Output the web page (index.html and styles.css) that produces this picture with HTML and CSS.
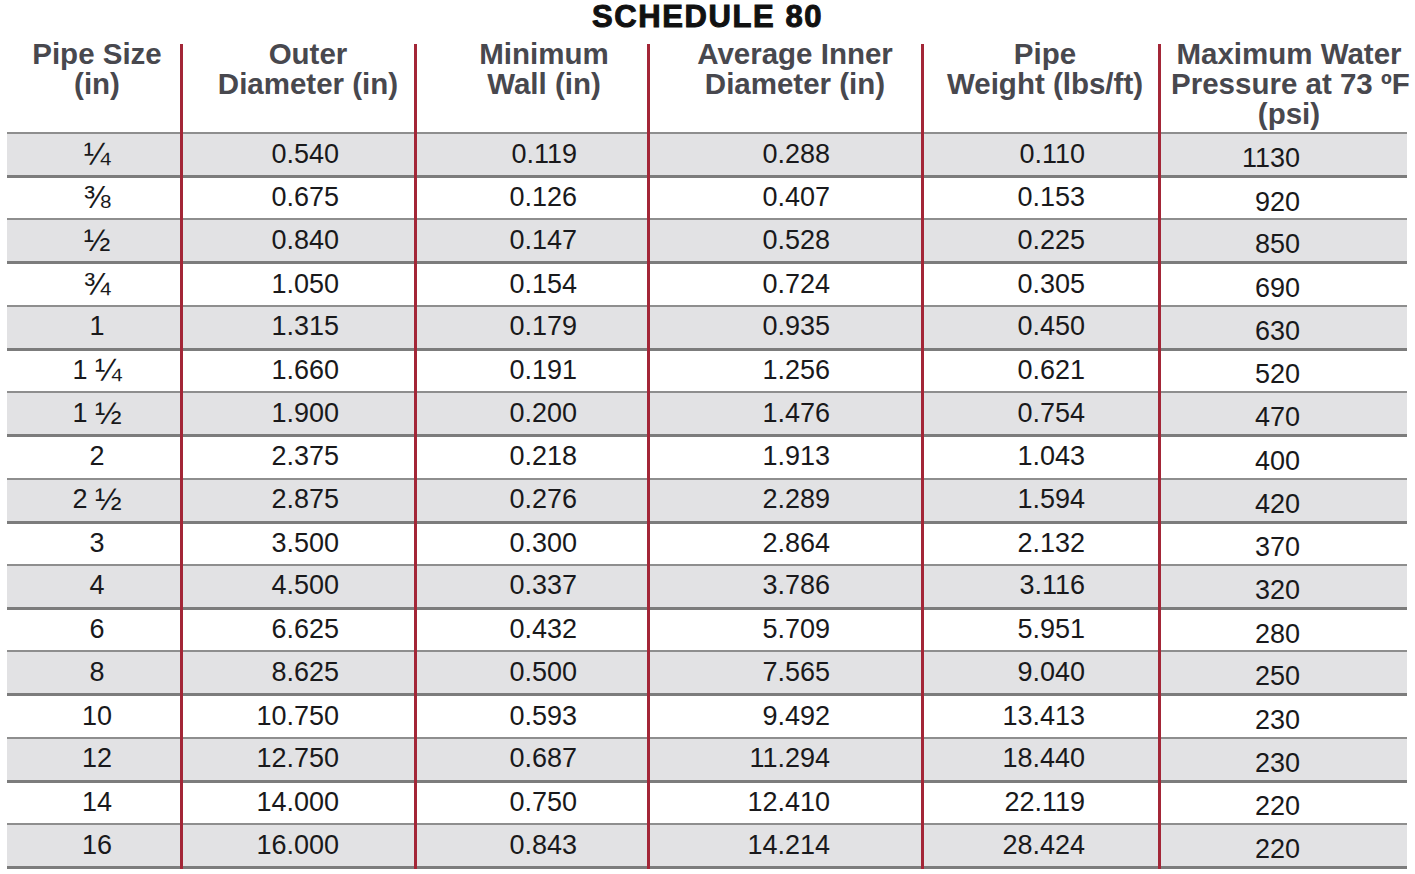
FILE: index.html
```html
<!DOCTYPE html>
<html lang="en">
<head>
<meta charset="utf-8">
<title>Schedule 80</title>
<link rel="stylesheet" href="styles.css">
</head>
<body>
<h1 class="title">SCHEDULE 80</h1>
<div class="table">
  <div class="col c1">
    <div class="th"><div class="th-text">Pipe Size<br>(in)</div></div>
    <div class="td g"><span class="frac">¼</span></div><div class="td w"><span class="frac">⅜</span></div><div class="td g"><span class="frac">½</span></div><div class="td w"><span class="frac">¾</span></div>
    <div class="td g">1</div><div class="td w">1&nbsp;<span class="frac">¼</span></div><div class="td g">1&nbsp;<span class="frac">½</span></div><div class="td w">2</div>
    <div class="td g">2&nbsp;<span class="frac">½</span></div><div class="td w">3</div><div class="td g">4</div><div class="td w">6</div>
    <div class="td g">8</div><div class="td w">10</div><div class="td g">12</div><div class="td w">14</div>
    <div class="td g">16</div>
  </div>
  <div class="col c2">
    <div class="th"><div class="th-text">Outer<br>Diameter (in)</div></div>
    <div class="td g">0.540</div><div class="td w">0.675</div><div class="td g">0.840</div><div class="td w">1.050</div>
    <div class="td g">1.315</div><div class="td w">1.660</div><div class="td g">1.900</div><div class="td w">2.375</div>
    <div class="td g">2.875</div><div class="td w">3.500</div><div class="td g">4.500</div><div class="td w">6.625</div>
    <div class="td g">8.625</div><div class="td w">10.750</div><div class="td g">12.750</div><div class="td w">14.000</div>
    <div class="td g">16.000</div>
  </div>
  <div class="col c3">
    <div class="th"><div class="th-text">Minimum<br>Wall (in)</div></div>
    <div class="td g">0.119</div><div class="td w">0.126</div><div class="td g">0.147</div><div class="td w">0.154</div>
    <div class="td g">0.179</div><div class="td w">0.191</div><div class="td g">0.200</div><div class="td w">0.218</div>
    <div class="td g">0.276</div><div class="td w">0.300</div><div class="td g">0.337</div><div class="td w">0.432</div>
    <div class="td g">0.500</div><div class="td w">0.593</div><div class="td g">0.687</div><div class="td w">0.750</div>
    <div class="td g">0.843</div>
  </div>
  <div class="col c4">
    <div class="th"><div class="th-text">Average Inner<br>Diameter (in)</div></div>
    <div class="td g">0.288</div><div class="td w">0.407</div><div class="td g">0.528</div><div class="td w">0.724</div>
    <div class="td g">0.935</div><div class="td w">1.256</div><div class="td g">1.476</div><div class="td w">1.913</div>
    <div class="td g">2.289</div><div class="td w">2.864</div><div class="td g">3.786</div><div class="td w">5.709</div>
    <div class="td g">7.565</div><div class="td w">9.492</div><div class="td g">11.294</div><div class="td w">12.410</div>
    <div class="td g">14.214</div>
  </div>
  <div class="col c5">
    <div class="th"><div class="th-text">Pipe<br>Weight (lbs/ft)</div></div>
    <div class="td g">0.110</div><div class="td w">0.153</div><div class="td g">0.225</div><div class="td w">0.305</div>
    <div class="td g">0.450</div><div class="td w">0.621</div><div class="td g">0.754</div><div class="td w">1.043</div>
    <div class="td g">1.594</div><div class="td w">2.132</div><div class="td g">3.116</div><div class="td w">5.951</div>
    <div class="td g">9.040</div><div class="td w">13.413</div><div class="td g">18.440</div><div class="td w">22.119</div>
    <div class="td g">28.424</div>
  </div>
  <div class="col c6">
    <div class="th"><div class="th-text">Maximum Water<br>Pressure at 73 ºF<br>(psi)</div></div>
    <div class="td g">1130</div><div class="td w">920</div><div class="td g">850</div><div class="td w">690</div>
    <div class="td g">630</div><div class="td w">520</div><div class="td g">470</div><div class="td w">400</div>
    <div class="td g">420</div><div class="td w">370</div><div class="td g">320</div><div class="td w">280</div>
    <div class="td g">250</div><div class="td w">230</div><div class="td g">230</div><div class="td w">220</div>
    <div class="td g">220</div>
  </div>
</div>
</body>
</html>
```
FILE: styles.css
```css
html, body {
  margin: 0;
  padding: 0;
  background: #ffffff;
}
body {
  font-family: "Liberation Sans", Arial, sans-serif;
  overflow: hidden;
}
.title {
  margin: 0;
  height: 34px;
  line-height: 34px;
  font-size: 31px;
  font-weight: bold;
  text-align: center;
  letter-spacing: 1.6px;
  color: #111111;
  -webkit-text-stroke: 1px #111111;
}
.table {
  display: flex;
  margin: 10px 0 0 7px;
  width: 1400px;
}
.col {
  display: flex;
  flex-direction: column;
}
.col + .col {
  border-left: 3px solid #a32637;
}
.c1 { width: 173px; }
.c2 { width: 231px; }
.c3 { width: 230px; }
.c4 { width: 271px; }
.c5 { width: 234px; }
.c6 { width: 246px; }

.th {
  height: 88px;
  box-sizing: border-box;
}
.th-text {
  margin-top: -5px;
  font-size: 29.5px;
  line-height: 30px;
  font-weight: bold;
  color: #48484e;
  text-align: center;
  white-space: nowrap;
}
.c1 .th-text { padding-left: 7px; }
.c2 .th-text { padding-left: 19px; }
.c3 .th-text { padding-left: 24px; }
.c4 .th-text { padding-left: 19px; }
.c5 .th-text { padding-left: 8px; }
.c6 .th-text { padding-left: 10px; }

.td {
  display: flex;
  align-items: center;
  box-sizing: border-box;
  font-size: 27px;
  line-height: 27px;
  color: #19191b;
  padding-bottom: 1px;
  white-space: nowrap;
}
.td.g {
  height: 46px;
  background: #e2e2e4;
  border-top: 2px solid #8e8e8e;
  border-bottom: 3px solid #7c7c7c;
}
.td.w {
  height: 40.4px;
  background: #ffffff;
}
.frac {
  font-size: 32px;
  line-height: 27px;
}
.c1 .td { justify-content: center; padding-left: 7px; }
.c2 .td { justify-content: flex-end; padding-right: 75px; }
.c3 .td { justify-content: flex-end; padding-right: 70px; }
.c4 .td { justify-content: flex-end; padding-right: 91px; }
.c5 .td { justify-content: flex-end; padding-right: 73px; }
.c6 .td { justify-content: flex-end; padding-right: 107px; padding-top: 8px; padding-bottom: 0; }
```
